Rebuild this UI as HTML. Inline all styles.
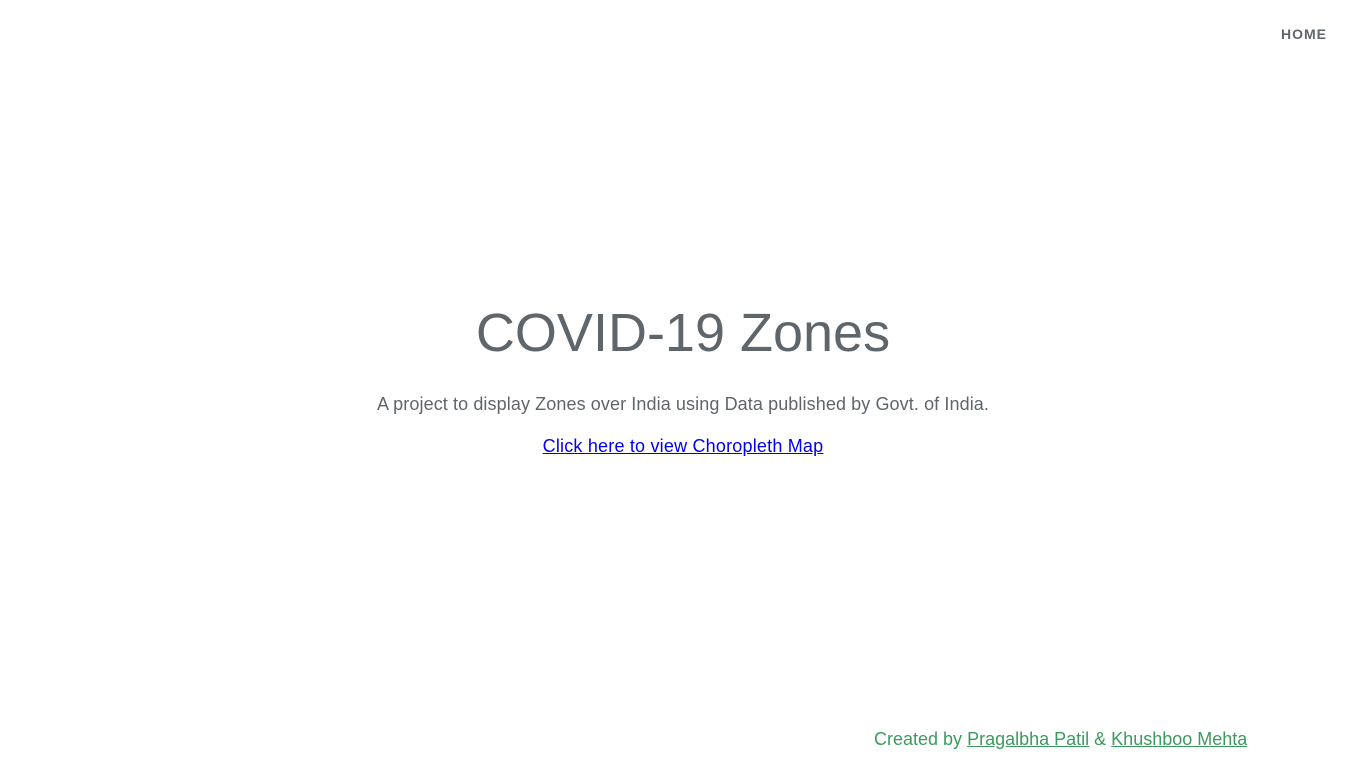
<!DOCTYPE html>
<html><head><meta charset="utf-8"><style>
html,body{margin:0;padding:0;background:#fff;width:1366px;height:768px;overflow:hidden;font-family:"Liberation Sans",sans-serif;}
.nav{position:absolute;top:26px;right:39px;font-size:14px;font-weight:bold;letter-spacing:1px;color:#5f666b;}
h1{position:absolute;top:298px;left:0;width:1366px;text-align:center;margin:0;font-weight:normal;font-size:54px;color:#5f666b;line-height:70px;}
.sub{position:absolute;top:394px;left:0;width:1366px;text-align:center;font-size:18px;letter-spacing:0.1px;color:#5f666b;}
.lnk{position:absolute;top:436px;left:0;width:1366px;text-align:center;font-size:18px;letter-spacing:0.2px;}
.lnk a{color:#0000ee;}
.foot{position:absolute;top:729px;left:874px;font-size:18px;letter-spacing:0;color:#3c9a5f;}
.foot a{color:#3c9a5f;}
</style></head><body>
<div class="nav">HOME</div>
<h1>COVID-19 Zones</h1>
<div class="sub">A project to display Zones over India using Data published by Govt. of India.</div>
<div class="lnk"><a href="#">Click here to view Choropleth Map</a></div>
<div class="foot">Created by <a href="#">Pragalbha Patil</a> &amp; <a href="#">Khushboo Mehta</a></div>
</body></html>
